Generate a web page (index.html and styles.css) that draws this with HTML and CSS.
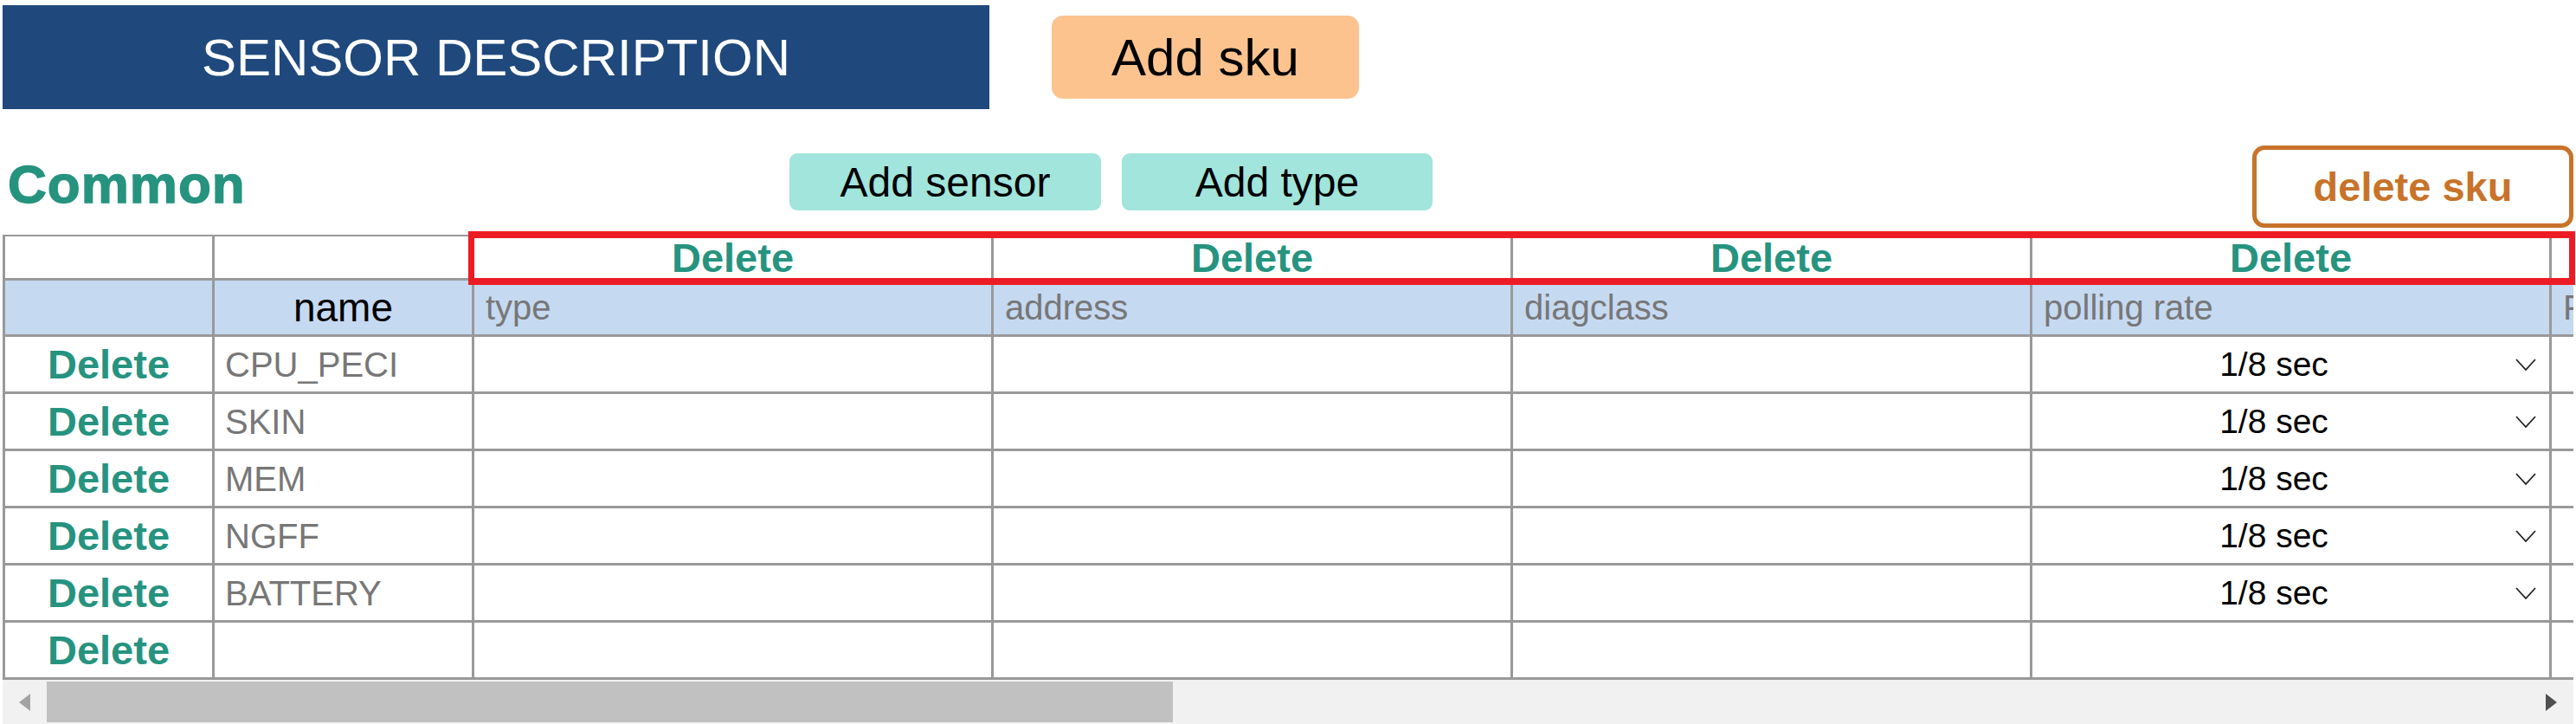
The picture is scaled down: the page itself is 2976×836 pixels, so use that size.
FILE: index.html
```html
<!DOCTYPE html>
<html lang="en">
<head>
<meta charset="utf-8">
<title>Sensor Description</title>
<link rel="stylesheet" href="styles.css">
</head>
<body>
<div class="page">
  <header class="top-bar">
    <h1 class="title">SENSOR DESCRIPTION</h1>
    <button class="btn btn-sku">Add sku</button>
  </header>

  <section class="toolbar">
    <h2 class="section-name">Common</h2>
    <div class="actions">
      <button class="btn btn-teal btn-sensor">Add sensor</button>
      <button class="btn btn-teal btn-type">Add type</button>
    </div>
    <button class="btn btn-delete-sku">delete sku</button>
  </section>

  <div class="sheet">
    <div class="viewport">
      <table class="grid">
        <colgroup>
          <col class="c-del">
          <col class="c-name">
          <col class="c-data" span="5">
        </colgroup>
        <thead>
          <tr class="row-actions">
            <td></td>
            <td></td>
            <td class="del">Delete</td>
            <td class="del">Delete</td>
            <td class="del">Delete</td>
            <td class="del">Delete</td>
            <td class="del"></td>
          </tr>
          <tr class="row-head">
            <th></th>
            <th class="h-name">name</th>
            <th>type</th>
            <th>address</th>
            <th>diagclass</th>
            <th>polling rate</th>
            <th>F</th>
          </tr>
        </thead>
        <tbody>
          <tr>
            <td class="del">Delete</td>
            <td class="name">CPU_PECI</td>
            <td></td><td></td><td></td>
            <td class="rate"><div class="select"><span class="val">1/8 sec</span><svg class="chev" viewBox="0 0 24 14"><polyline points="1,1 12,13 23,1"/></svg></div></td>
            <td></td>
          </tr>
          <tr>
            <td class="del">Delete</td>
            <td class="name">SKIN</td>
            <td></td><td></td><td></td>
            <td class="rate"><div class="select"><span class="val">1/8 sec</span><svg class="chev" viewBox="0 0 24 14"><polyline points="1,1 12,13 23,1"/></svg></div></td>
            <td></td>
          </tr>
          <tr>
            <td class="del">Delete</td>
            <td class="name">MEM</td>
            <td></td><td></td><td></td>
            <td class="rate"><div class="select"><span class="val">1/8 sec</span><svg class="chev" viewBox="0 0 24 14"><polyline points="1,1 12,13 23,1"/></svg></div></td>
            <td></td>
          </tr>
          <tr>
            <td class="del">Delete</td>
            <td class="name">NGFF</td>
            <td></td><td></td><td></td>
            <td class="rate"><div class="select"><span class="val">1/8 sec</span><svg class="chev" viewBox="0 0 24 14"><polyline points="1,1 12,13 23,1"/></svg></div></td>
            <td></td>
          </tr>
          <tr>
            <td class="del">Delete</td>
            <td class="name">BATTERY</td>
            <td></td><td></td><td></td>
            <td class="rate"><div class="select"><span class="val">1/8 sec</span><svg class="chev" viewBox="0 0 24 14"><polyline points="1,1 12,13 23,1"/></svg></div></td>
            <td></td>
          </tr>
          <tr>
            <td class="del">Delete</td>
            <td class="name"></td>
            <td></td><td></td><td></td><td></td><td></td>
          </tr>
        </tbody>
      </table>
    </div>

    <div class="hscroll">
      <div class="arrow-box"><span class="arrow arrow-left"></span></div>
      <div class="track"><div class="thumb"></div></div>
      <div class="arrow-box"><span class="arrow arrow-right"></span></div>
    </div>

    <div class="highlight"></div>
  </div>
</div>
</body>
</html>
```

FILE: styles.css
```css
* {
  box-sizing: border-box;
}

html,
body {
  margin: 0;
  padding: 0;
  background: #ffffff;
  overflow: hidden;
}

body {
  font-family: "Liberation Sans", Arial, sans-serif;
  width: 2976px;
  height: 836px;
}

.page {
  padding: 0 3px;
}

/* ---------- top bar ---------- */
.top-bar {
  display: flex;
  align-items: center;
  padding-top: 6px;
  height: 126px;
}

.title {
  margin: 0;
  width: 1140px;
  height: 120px;
  background: #1f497d;
  color: #ffffff;
  font-size: 60px;
  font-weight: 400;
  display: flex;
  align-items: center;
  justify-content: center;
}

.btn {
  border: 0;
  padding: 0;
  margin: 0;
  font-family: inherit;
  display: flex;
  align-items: center;
  justify-content: center;
  cursor: pointer;
}

.btn-sku {
  margin-left: 72px;
  width: 355px;
  height: 96px;
  border-radius: 13px;
  background: #fcc38e;
  color: #000000;
  font-size: 60px;
}

/* ---------- toolbar ---------- */
.toolbar {
  display: grid;
  grid-template-columns: 909px auto 1fr auto;
  align-items: start;
  height: 145px;
}

.section-name {
  margin: 56px 0 0 6px;
  font-size: 62px;
  line-height: 1;
  font-weight: 700;
  color: #26937f;
  letter-spacing: 1px;
  -webkit-text-stroke: 1.4px #26937f;
}

.actions {
  display: flex;
  gap: 24px;
  margin-top: 51px;
}

.btn-teal {
  height: 66px;
  border-radius: 9px;
  background: #a1e5dc;
  color: #000000;
  font-size: 48px;
}

.btn-sensor {
  width: 360px;
}

.btn-type {
  width: 359px;
}

.btn-delete-sku {
  grid-column: 4;
  margin-top: 42px;
  width: 371px;
  height: 95px;
  border: 5px solid #c87329;
  border-radius: 14px;
  background: #ffffff;
  color: #c87329;
  font-size: 47px;
  font-weight: 700;
}

/* ---------- sheet ---------- */
.sheet {
  position: relative;
}

.viewport {
  width: 2970px;
  overflow: hidden;
}

.grid {
  border-collapse: separate;
  border-spacing: 0;
  table-layout: fixed;
  width: 3545px;
  border-left: 3px solid #999999;
  border-top: 2px solid #999999;
}

.c-del {
  width: 242px;
}

.c-name {
  width: 300px;
}

.c-data {
  width: 600px;
}

.grid td,
.grid th {
  border-right: 3px solid #999999;
  border-bottom: 3px solid #999999;
  padding: 0 12px;
  line-height: 1;
  white-space: nowrap;
  vertical-align: middle;
}

.row-actions {
  height: 51px;
}

.row-head {
  height: 65px;
  background: #c5d9f1;
}

.grid tbody tr {
  height: 66px;
}

.grid .del {
  color: #26937f;
  font-weight: 700;
  font-size: 47px;
  text-align: center;
  padding: 0;
}

.row-head th {
  font-weight: 400;
  font-size: 40px;
  color: #777777;
  text-align: left;
  padding-left: 13px;
}

.row-head .h-name {
  color: #000000;
  text-align: center;
  font-size: 46px;
  padding: 0;
}

.grid .name {
  font-size: 40px;
  color: #777777;
}

.grid .rate {
  padding: 0 15px 0 0;
}

.select {
  display: flex;
  align-items: center;
}

.val {
  flex: 1;
  text-align: center;
  font-size: 39px;
  color: #000000;
}

.chev {
  width: 24px;
  height: 14px;
  fill: none;
  stroke: #222222;
  stroke-width: 1.8;
}

/* ---------- horizontal scrollbar ---------- */
.hscroll {
  display: flex;
  width: 2970px;
  height: 51px;
  background: #f1f1f1;
}

.arrow-box {
  width: 51px;
  display: flex;
  align-items: center;
  justify-content: center;
}

.arrow {
  width: 0;
  height: 0;
  border-top: 10px solid transparent;
  border-bottom: 10px solid transparent;
}

.arrow-left {
  border-right: 13px solid #a3a3a3;
}

.arrow-right {
  border-left: 13px solid #505050;
}

.track {
  flex: 1;
  padding-top: 2px;
}

.thumb {
  width: 1301px;
  height: 47px;
  background: #c1c1c1;
}

/* ---------- annotation ---------- */
.highlight {
  position: absolute;
  left: 538px;
  top: -4px;
  width: 2434px;
  height: 62px;
  border-style: solid;
  border-color: #ed1c24;
  border-width: 8px 7px;
  pointer-events: none;
}
```
